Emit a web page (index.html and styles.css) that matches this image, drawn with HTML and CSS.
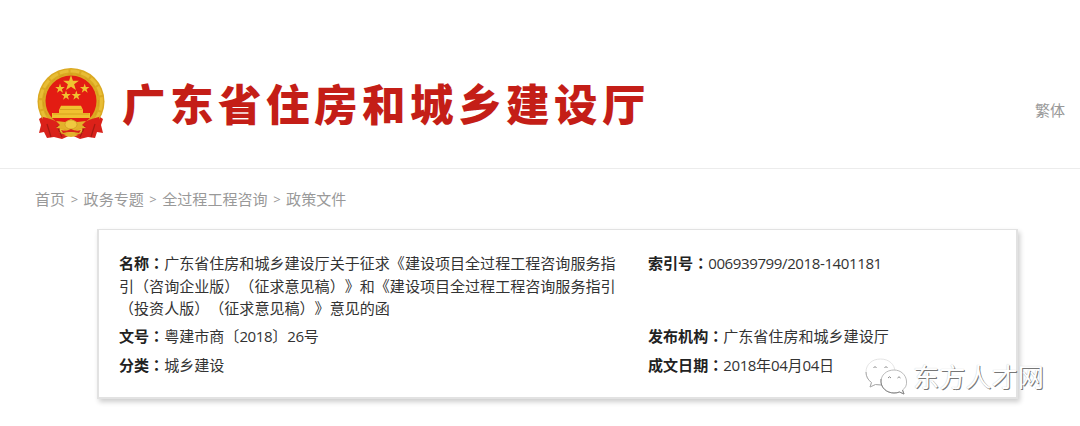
FILE: index.html
```html
<!DOCTYPE html>
<html lang="zh-CN">
<head>
    <meta charset="UTF-8">
    <meta name="viewport" content="width=device-width, initial-scale=1.0">
    <title>广东省住房和城乡建设厅</title>
    <link rel="stylesheet" href="styles.css">
</head>
<body>

    <header class="header">
        <!-- National emblem -->
        <svg class="emblem" viewBox="0 0 70 74">
            <path d="M9 48 L3 52 L5 58 L3 66 L8 65 L11 71 L18 70 L26 72 L35 68 L44 72 L52 70 L59 71 L61 65 L67 66 L65 58 L67 52 L61 48 Z" fill="#d8221b"/>
            <circle cx="35" cy="34.500" r="33.500" fill="#dba922"/>
            <circle cx="35" cy="34.500" r="30.500" fill="none" stroke="#e8bd35" stroke-width="3" stroke-dasharray="9 2"/>
            <circle cx="35" cy="34.500" r="27.500" fill="none" stroke="#cf9c1c" stroke-width=".8" stroke-dasharray="5 4"/>
            <circle cx="35" cy="34" r="25.500" fill="#e31c13"/>
            <g fill="#f0c230">
                <path id="star" d="M35 10 L36.600 14.800 L41.600 14.800 L37.600 17.800 L39.100 22.600 L35 19.700 L30.900 22.600 L32.400 17.800 L28.400 14.800 L33.400 14.800 Z" transform="translate(-7 -4) scale(1.200)"/>
                <use href="#star" transform="translate(3 11.800) scale(.6)"/>
                <use href="#star" transform="translate(27.700 11.800) scale(.6)"/>
                <use href="#star" transform="translate(9 18.800) scale(.6)"/>
                <use href="#star" transform="translate(19.300 18.800) scale(.6)"/>
                <path d="M25 38.700 H45 L47 43 V46 H54 V51 H16 V46 H23 V43 Z"/>
            </g>
            <path d="M24 42.500 H46 M17 47 H53" stroke="#d29c18" stroke-width=".8"/>
            <path d="M7 50 Q17 52 25 57 L22 70 Q15 59 5 58 Z M63 50 Q53 52 45 57 L48 70 Q55 59 65 58 Z" fill="#dc2119"/>
            <path d="M11 57 L15 70 M59 57 L55 70 M21 59 L26 70 M49 59 L44 70" stroke="#a51a12" stroke-width="1.200"/>
            <path d="M20 54 L29 55 L35 52 L41 55 L50 54 L46 58 L50 61 L41 62 L35 65 L29 62 L20 61 L24 58 Z" fill="#e3b12b"/>
            <ellipse cx="35" cy="57.500" rx="6" ry="4.500" fill="#f0c840" stroke="#c99220" stroke-width=".6"/>
            <path d="M25 63 Q30 65 35 62 Q40 65 45 63 L43 66 Q35 64 27 66 Z" fill="#dc2119"/>
            <path d="M28 68 Q35 63 42 68 Q35 72 28 68 Z" fill="#e3b12b"/>
        </svg>
        <h1 class="site-name">广东省住房和城乡建设厅</h1>
        <a class="lang">繁体</a>
    </header>

    <nav class="crumbs">
        <a>首页</a><i>&gt;</i><a>政务专题</a><i>&gt;</i><a>全过程工程咨询</a><i>&gt;</i><a>政策文件</a>
    </nav>

    <div class="info">
        <div class="item"><b>名称<span lang="zh-TW">：</span></b>广东省住房和城乡建设厅关于征求《建设项目全过程工程咨询服务指<br>引<span lang="zh-TW">（</span>咨询企业版<span lang="zh-TW">）（</span>征求意见稿<span lang="zh-TW">）</span>》和《建设项目全过程工程咨询服务指引<br><span lang="zh-TW">（</span>投资人版<span lang="zh-TW">）（</span>征求意见稿<span lang="zh-TW">）</span>》意见的函</div>
        <div class="item"><b>索引号<span lang="zh-TW">：</span></b><span class="num">006939799/2018-1401181</span></div>
        <div class="item"><b>文号<span lang="zh-TW">：</span></b>粤建市商〔<span class="num">2018</span>〕<span class="num">26</span>号</div>
        <div class="item"><b>发布机构<span lang="zh-TW">：</span></b>广东省住房和城乡建设厅</div>
        <div class="item"><b>分类<span lang="zh-TW">：</span></b>城乡建设</div>
        <div class="item"><b>成文日期<span lang="zh-TW">：</span></b><span class="num">2018</span>年<span class="num">04</span>月<span class="num">04</span>日</div>

        <!-- Watermark over the card corner -->
        <div class="watermark">
            <svg class="wechat" viewBox="0 0 42 37">
                <g fill="#fff" stroke-linejoin="round">
                    <path d="M15.500 1 C7 1 1 6.500 1 14 C1 18.500 3 22 6.500 24.500 L5 29 L10.500 26.500 C22 29 30 22 30 14 C30 6.500 24 1 15.500 1 Z" stroke="#ddd" stroke-width=".8"/>
                    <path d="M1 14 C1 18.500 3 22 6.500 24.500 L5 29 L10.500 26.500 L17 27" fill="none" stroke="#aaa"/>
                    <path d="M29 12 C21.500 12 16 17 16 23.500 C16 30 22 35 29 35 Q32 35 34.500 34 L39 36 L37.500 32 C40.500 30 42 27 41.500 23 C41 17 36 12 29 12 Z" stroke="#aaa" stroke-width=".8"/>
                    <path d="M16 21 C15 30 22 35 29 35 Q32 35 34.500 34 L39 36 L37.500 32" fill="none" stroke="#888"/>
                </g>
                <path d="M8.500 10 Q10 7 11.500 10 M19.500 10 Q21 7 22.500 10 M23 20 Q24.500 17.500 26 20 M32.500 20 Q34 17.500 35.500 20" fill="none" stroke="#888"/>
            </svg>
            <span>东方人才网</span>
        </div>
    </div>

</body>
</html>
```
FILE: styles.css
```css
* {
    box-sizing: border-box;
}

body {
    margin: 0;
    min-height: 100vh;
    background-color: #fff;
    font-family: "Noto Sans CJK SC", sans-serif;
    font-size: 15.06px;
    color: #333;
    text-spacing-trim: space-all;
}

[lang="zh-TW"] {
    font-family: "Noto Sans CJK TC", sans-serif;
}

.header {
    display: flex;
    align-items: flex-start;
    height: 169px;
    padding: 67px 15px 0 36px;
    border-bottom: 1px solid #ececec;
}

.emblem {
    width: 70px;
    height: 74px;
}

.site-name {
    margin: 6px 0 0 16px;
    font-size: 43.5px;
    line-height: 60px;
    font-weight: 900;
    letter-spacing: 4.5px;
    color: #c41e17;
    white-space: nowrap;
}

.lang {
    margin: 32px 0 0 auto;
    line-height: 22px;
    color: #999;
}

.crumbs {
    display: flex;
    padding: 19px 35px 0;
    line-height: 22px;
    color: #999;
}

.crumbs i {
    width: 18.5px;
    font-family: "Open Sans", sans-serif;
    font-size: 13px;
    font-style: normal;
    text-align: center;
}

.info {
    position: relative;
    display: grid;
    grid-template-columns: 529px 1fr;
    row-gap: 5.7px;
    align-content: start;
    width: 921px;
    height: 170px;
    margin: 19px 0 0 97px;
    padding: 22px 0 0 20px;
    border: 2px solid #e2e2e2;
    border-top-width: 1px;
    box-shadow: 2px 3px 5px rgba(0, 0, 0, 0.2);
}

.item {
    line-height: 22.6px;
    white-space: nowrap;
}

.item b {
    color: #222;
}

.num {
    font-family: "Open Sans", sans-serif;
    letter-spacing: -0.4px;
}

.watermark {
    position: absolute;
    left: 766px;
    top: 128px;
    display: flex;
    align-items: flex-start;
    font-size: 26.2px;
    line-height: 36px;
    font-weight: 400;
    color: #fff;
    text-shadow: 1px 1px 0.5px #777, 0 0 1px #bbb;
    white-space: nowrap;
}

.wechat {
    width: 42px;
    height: 37px;
    margin-right: 6px;
}
```
